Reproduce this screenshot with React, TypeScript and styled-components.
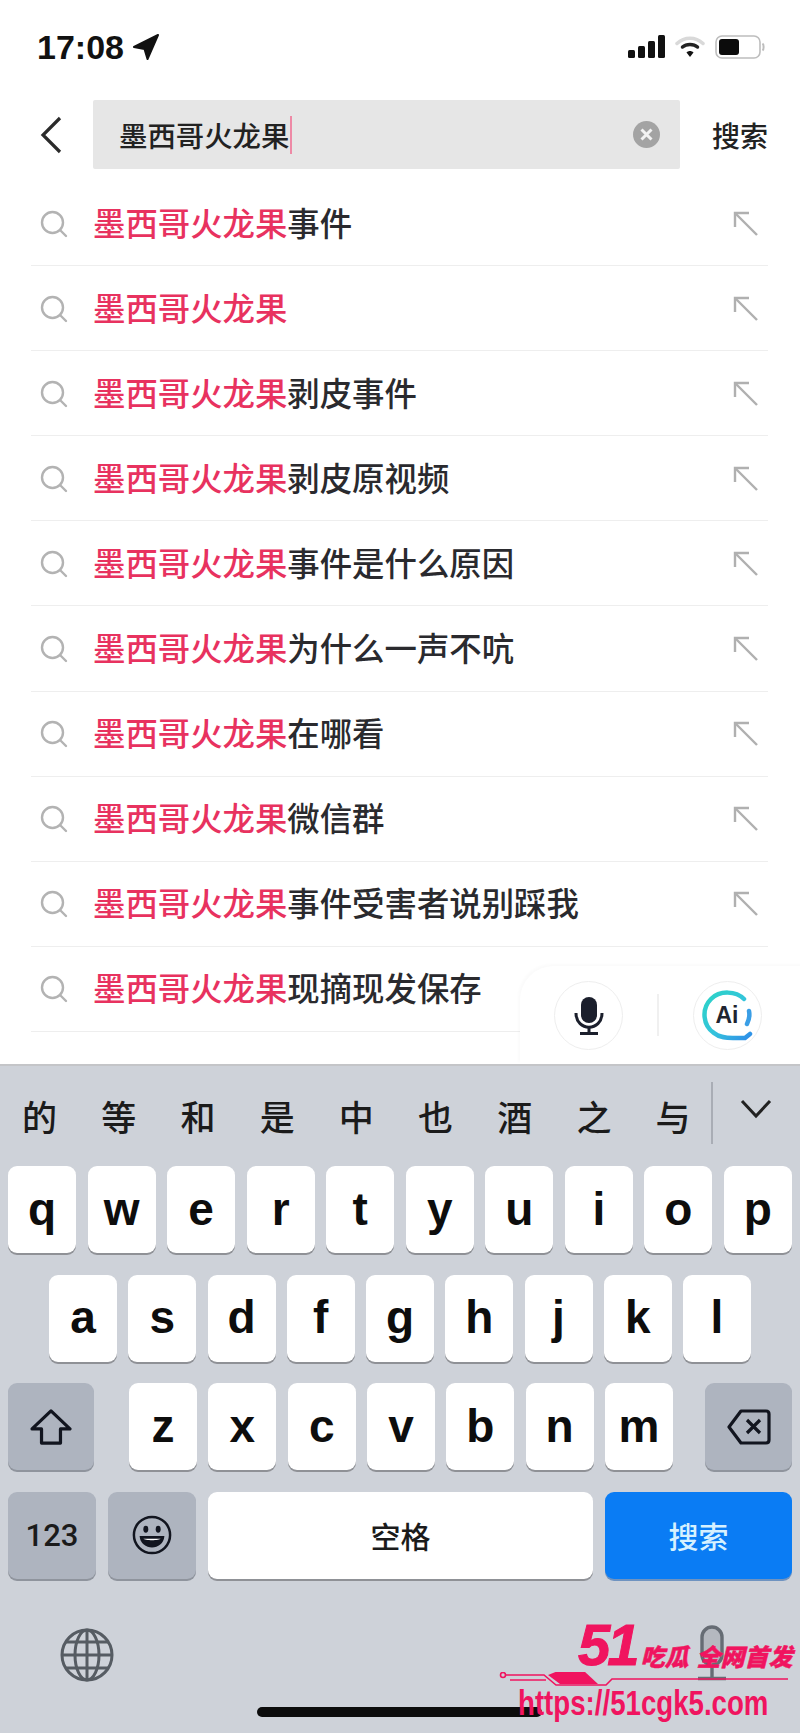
import React from 'react'
import styled, { createGlobalStyle } from 'styled-components'

const CJK = '"Noto Sans CJK SC", "Liberation Sans", sans-serif'
const KEYWORD = '墨西哥火龙果'
const SUGGESTIONS = [
  '事件',
  '',
  '剥皮事件',
  '剥皮原视频',
  '事件是什么原因',
  '为什么一声不吭',
  '在哪看',
  '微信群',
  '事件受害者说别踩我',
  '现摘现发保存'
]
const CANDIDATES = ['的', '等', '和', '是', '中', '也', '酒', '之', '与']
const ROW_1 = ['q', 'w', 'e', 'r', 't', 'y', 'u', 'i', 'o', 'p']
const ROW_2 = ['a', 's', 'd', 'f', 'g', 'h', 'j', 'k', 'l']
const ROW_3 = ['z', 'x', 'c', 'v', 'b', 'n', 'm']

const GlobalStyle = createGlobalStyle`
  html, body {
    margin: 0;
    padding: 0;
    background: #fff;
  }
`

const Page = styled.div`
  position: relative;
  width: 800px;
  height: 1733px;
  display: flex;
  flex-direction: column;
  overflow: hidden;
  background: #fff;
  font-family: ${CJK};
  color: #222;
`

const StatusBar = styled.div`
  height: 100px;
  box-sizing: border-box;
  padding: 30px 35px 0 37px;
  display: flex;
  align-items: flex-start;
  justify-content: space-between;
`

const Time = styled.div`
  display: flex;
  align-items: center;
  gap: 9px;
  font-family: 'Liberation Sans', sans-serif;
  font-weight: 700;
  font-size: 34px;
  line-height: 34px;
  color: #111;
`

const StatusIcons = styled.div`
  display: flex;
  align-items: center;
  gap: 10px;
  height: 34px;
`

const SearchRow = styled.div`
  height: 69px;
  padding: 0 32px 0 40px;
  display: flex;
  align-items: center;
`

const BackButton = styled.div`
  width: 53px;
  display: flex;
  align-items: center;
`

const SearchBox = styled.div`
  width: 587px;
  height: 69px;
  box-sizing: border-box;
  padding: 0 20px 0 26px;
  display: flex;
  align-items: center;
  justify-content: space-between;
  background: #e6e6e6;
  border-radius: 2px;
`

const SearchText = styled.div`
  display: flex;
  align-items: center;
  font-size: 28.4px;
  font-weight: 500;
  line-height: 36px;
  color: #222;
`

const Caret = styled.span`
  width: 1.5px;
  height: 38px;
  margin-left: 1px;
  background: #ee8aa6;
`

const SearchAction = styled.div`
  margin-left: auto;
  font-size: 28px;
  font-weight: 500;
  line-height: 36px;
  color: #222;
`

const List = styled.div`
  margin-top: 12px;
  height: 883px;
  padding: 0 32px 0 31px;
`

const Row = styled.div`
  height: 85.1px;
  box-sizing: border-box;
  padding-bottom: 3px;
  display: flex;
  align-items: center;
  border-bottom: 1.5px solid #eeeeee;
`

const RowSearch = styled.div`
  width: 62px;
  padding: 4px 0 0 9px;
  box-sizing: border-box;
  display: flex;
`

const RowText = styled.div`
  flex: 1;
  font-size: 32.4px;
  font-weight: 500;
  line-height: 40px;
  color: #2a2a2e;
`

const Match = styled.span`
  color: #e8325f;
`

const RowArrow = styled.div`
  margin: 4px 9px 0 0;
  display: flex;
`

const VoicePanel = styled.div`
  position: absolute;
  top: 966px;
  left: 520px;
  width: 300px;
  height: 98px;
  display: flex;
  align-items: center;
  box-sizing: border-box;
  padding: 0 0 0 34px;
  background: #fff;
  border-top-left-radius: 34px;
  box-shadow: -2px -2px 3px rgba(0, 0, 0, 0.018);
`

const RoundButton = styled.div`
  width: 69px;
  height: 69px;
  border-radius: 50%;
  border: 1.5px solid #eeeeee;
  box-sizing: border-box;
  display: flex;
  align-items: center;
  justify-content: center;
  background: #fff;
`

const PanelDivider = styled.div`
  width: 1.5px;
  height: 42px;
  margin: 0 34px;
  background: #f0f0f0;
`

const AiMark = styled.div`
  position: relative;
  width: 54px;
  height: 54px;
  display: flex;
  align-items: center;
  justify-content: center;
`

const AiLabel = styled.span`
  position: relative;
  font-family: 'Liberation Sans', sans-serif;
  font-weight: 700;
  font-size: 23px;
  color: #1f2430;
`

const Keyboard = styled.div`
  flex: 1;
  display: flex;
  flex-direction: column;
  background: #ced2d9;
  border-top: 2px solid #c4c5c8;
`

const CandidateBar = styled.div`
  height: 100px;
  display: flex;
  align-items: center;
`

const Candidates = styled.div`
  width: 711px;
  display: grid;
  grid-template-columns: repeat(9, 79.2px);
`

const Candidate = styled.span`
  text-align: center;
  font-size: 35px;
  line-height: 44px;
  font-weight: 500;
  color: #1b1b1b;
`

const CandidateDivider = styled.div`
  width: 1.5px;
  height: 62px;
  margin-top: -6px;
  background: #a9adb5;
`

const Collapse = styled.div`
  flex: 1;
  display: flex;
  justify-content: center;
  margin-top: -14px;
`

const KeyRows = styled.div`
  display: flex;
  flex-direction: column;
  gap: 21.5px;
  padding: 0 8px;
`

const KeyRow = styled.div<{ $inset?: number }>`
  display: flex;
  justify-content: space-between;
  padding: 0 ${p => p.$inset || 0}px;
`

const LetterGroup = styled.div`
  display: flex;
  gap: 11.3px;
  margin-left: 3px;
`

const Key = styled.div<{ $width?: number; $tone?: 'letter' | 'dark' | 'blue' }>`
  width: ${p => p.$width || 68}px;
  height: 87px;
  flex: none;
  box-sizing: border-box;
  display: flex;
  align-items: center;
  justify-content: center;
  border-radius: 9px;
  background: ${p =>
    p.$tone === 'dark' ? '#aeb4bf' : p.$tone === 'blue' ? '#0a7cf4' : '#fff'};
  box-shadow: 0 2px 0
    ${p => (p.$tone === 'dark' ? '#8f949d' : p.$tone === 'blue' ? '#6f93c0' : '#8f9196')};
`

const Letter = styled.span`
  font-family: 'Liberation Sans', sans-serif;
  font-weight: 700;
  font-size: 46px;
  line-height: 1;
  color: #0d0d0d;
  margin-top: -2px;
`

const NumberLabel = styled.span`
  font-family: Roboto, sans-serif;
  font-weight: 500;
  font-size: 31px;
  color: #1b1b1b;
`

const SpaceLabel = styled.span`
  font-size: 30px;
  font-weight: 500;
  color: #1b1b1b;
`

const GoLabel = styled.span`
  font-size: 30px;
  font-weight: 500;
  color: #d6f1ff;
`

const KeyboardFooter = styled.div`
  flex: 1;
  display: flex;
  align-items: flex-start;
  justify-content: space-between;
  padding: 49px 73px 0 60px;
`

const FooterMic = styled.div`
  margin-top: -3px;
  display: flex;
`

const HomeBar = styled.div`
  position: absolute;
  left: 257px;
  top: 1707px;
  width: 285px;
  height: 10px;
  border-radius: 5px;
  background: #0c0c0c;
`

const Watermark = styled.div`
  position: absolute;
  left: 498px;
  top: 1620px;
  width: 296px;
  height: 110px;
  color: #f0145f;
`

const WatermarkTitle = styled.div`
  display: flex;
  align-items: flex-end;
  padding-left: 80px;
  height: 50px;
  font-style: italic;
  font-weight: 900;
  white-space: nowrap;
`

const WatermarkBig = styled.span`
  font-family: 'Liberation Sans', sans-serif;
  font-size: 58px;
  line-height: 50px;
  letter-spacing: -3px;
  -webkit-text-stroke: 1px #f0145f;
`

const WatermarkSmall = styled.span<{ $gap?: number }>`
  font-size: 24px;
  line-height: 28px;
  margin-left: ${p => p.$gap || 0}px;
  -webkit-text-stroke: 0.5px #f0145f;
`

const WatermarkLine = styled.svg`
  display: block;
  width: 296px;
  height: 16px;
  margin-top: 2px;
`

const WatermarkUrl = styled.div`
  margin: -3px 0 0 20px;
  font-family: 'Liberation Sans', sans-serif;
  font-weight: 700;
  font-size: 35px;
  line-height: 36px;
  white-space: nowrap;
  transform: scaleX(0.79);
  transform-origin: left center;
`

const LocationArrow = () => (
  <svg width="26" height="26" viewBox="0 0 26 26">
    <path d="M25 1 L14.5 25 L11.5 15 L1 13 Z" fill="#111" stroke="#111" strokeWidth="2" strokeLinejoin="round" />
  </svg>
)

const Signal = () => (
  <svg width="37" height="24" viewBox="0 0 37 24" fill="#111" style={{ marginLeft: 2 }}>
    <rect x="0" y="15" width="7" height="8" rx="1.5" />
    <rect x="10" y="11" width="7" height="12" rx="1.5" />
    <rect x="20" y="6" width="7" height="17" rx="1.5" />
    <rect x="30" y="0" width="7" height="23" rx="1.5" />
  </svg>
)

const Wifi = () => (
  <svg width="30" height="24" viewBox="0 0 30 24" fill="none" strokeLinecap="round">
    <path d="M2 8.5 C9.5 1.5 20.5 1.5 28 8.5" stroke="#d9d9d9" strokeWidth="3.5" />
    <path d="M7.5 12 C11.5 8.5 18.5 8.5 22.5 12" stroke="#222" strokeWidth="3.5" />
    <path d="M11.5 17.5 L15 22 L18.5 17.5 C16.5 15.5 13.5 15.5 11.5 17.5 Z" fill="#111" />
  </svg>
)

const Battery = () => (
  <svg width="50" height="24" viewBox="0 0 50 24" fill="none">
    <rect x="1" y="1" width="44" height="22" rx="6" stroke="#bdbdbd" strokeWidth="1.6" />
    <rect x="4" y="4" width="20" height="16" rx="3" fill="#0c0c0c" />
    <path d="M47.5 8.5 C49 9.5 49 14.5 47.5 15.5" stroke="#bdbdbd" strokeWidth="2" />
  </svg>
)

const BackChevron = () => (
  <svg width="22" height="38" viewBox="0 0 22 38" fill="none">
    <path d="M20 2 L3 19 L20 36" stroke="#2b2b2b" strokeWidth="3.2" />
  </svg>
)

const ClearIcon = () => (
  <svg width="27" height="27" viewBox="0 0 27 27">
    <circle cx="13.5" cy="13.5" r="13.5" fill="#a3a3a3" />
    <path d="M8.5 8.5 L18.5 18.5 M18.5 8.5 L8.5 18.5" stroke="#f2f2f2" strokeWidth="3" />
  </svg>
)

const SearchGlyph = () => (
  <svg width="28" height="28" viewBox="0 0 28 28" fill="none" stroke="#b3b3b3" strokeWidth="2.4">
    <circle cx="12.5" cy="12.5" r="10.5" />
    <path d="M20 20 L26 26" strokeLinecap="round" />
  </svg>
)

const FillArrow = () => (
  <svg width="26" height="26" viewBox="0 0 26 26" fill="none" stroke="#b0b0b0" strokeWidth="2.4">
    <path d="M2 16 V2 H16" />
    <path d="M2 2 L24 24" />
  </svg>
)

const PanelMic = () => (
  <svg width="30" height="39" viewBox="0 0 30 39" fill="none" stroke="#1b1f2c">
    <rect x="7" y="1" width="16" height="26" rx="8" fill="#1b1f2c" strokeWidth="0" />
    <path d="M2 17 C2 36 28 36 28 17" strokeWidth="3" />
    <path d="M15 31 V37 M6 37.5 H24" strokeWidth="3" />
  </svg>
)

const FooterMicIcon = () => (
  <svg width="30" height="56" viewBox="0 0 30 56" fill="none" stroke="#666c74" strokeWidth="3.4">
    <rect x="5" y="2" width="20" height="38" rx="10" fill="#b4b8bf" />
    <path d="M15 40 V53 M1 53.5 H29" />
  </svg>
)

const AiRing = () => (
  <svg
    width="54"
    height="54"
    viewBox="0 0 54 54"
    fill="none"
    strokeWidth="4.5"
    strokeLinecap="round"
    style={{ position: 'absolute', left: 0, top: 0 }}>
    <defs>
      <linearGradient id="aiRing" x1="0" y1="0" x2="1" y2="1">
        <stop offset="0" stopColor="#2cd4c6" />
        <stop offset="0.55" stopColor="#34c3dc" />
        <stop offset="1" stopColor="#2f8fe8" />
      </linearGradient>
    </defs>
    <path
      d="M44 11 C36 3 20 2 11 11 C1 21 3 38 14 45 C20 50 27 50 33 50 H45 L50 46"
      stroke="url(#aiRing)"
    />
    <path d="M49 23 C50 28 49 32 47 36" stroke="#3a9ee6" />
  </svg>
)

const ShiftIcon = () => (
  <svg width="42" height="36" viewBox="0 0 44 38" fill="none" stroke="#12151f" strokeWidth="3.4" strokeLinejoin="round">
    <path d="M22 2 L42 21 H32 V36 H12 V21 H2 Z" />
  </svg>
)

const DeleteIcon = () => (
  <svg width="44" height="36" viewBox="0 0 44 36" fill="none" stroke="#12151f" strokeWidth="3.2" strokeLinejoin="round">
    <path d="M14 2 H39 Q42 2 42 5 V31 Q42 34 39 34 H14 L2 18 Z" />
    <path d="M20 11 L33 24 M33 11 L20 24" />
  </svg>
)

const SmileIcon = () => (
  <svg width="40" height="40" viewBox="0 0 42 42" fill="none" stroke="#12151f" strokeWidth="2.6">
    <circle cx="21" cy="21" r="19" />
    <ellipse cx="14.5" cy="15" rx="2.6" ry="3.6" fill="#12151f" stroke="none" />
    <ellipse cx="27.5" cy="15" rx="2.6" ry="3.6" fill="#12151f" stroke="none" />
    <path d="M8 22 H34 C33 38 9 38 8 22 Z" fill="#12151f" stroke="none" />
    <path d="M12 25 H30 C29 27 13 27 12 25 Z" fill="#fff" stroke="none" />
  </svg>
)

const GlobeIcon = () => (
  <svg width="54" height="54" viewBox="0 0 54 54" fill="none" stroke="#565c63" strokeWidth="3">
    <circle cx="27" cy="27" r="25" />
    <ellipse cx="27" cy="27" rx="12" ry="25" />
    <path d="M27 2 V52 M2 27 H52 M6 14 H48 M6 40 H48" />
  </svg>
)

const ChevronDown = () => (
  <svg width="32" height="20" viewBox="0 0 32 20" fill="none">
    <path d="M2 2 L16 17 L30 2" stroke="#222" strokeWidth="3" />
  </svg>
)

export default function App() {
  return (
    <Page>
      <GlobalStyle />
      <StatusBar>
        <Time>
          17:08
          <LocationArrow />
        </Time>
        <StatusIcons>
          <Signal />
          <Wifi />
          <Battery />
        </StatusIcons>
      </StatusBar>

      <SearchRow>
        <BackButton>
          <BackChevron />
        </BackButton>
        <SearchBox>
          <SearchText>
            {KEYWORD}
            <Caret />
          </SearchText>
          <ClearIcon />
        </SearchBox>
        <SearchAction>搜索</SearchAction>
      </SearchRow>

      <List>
        {SUGGESTIONS.map((suffix, idx) => (
          <Row key={idx}>
            <RowSearch>
              <SearchGlyph />
            </RowSearch>
            <RowText>
              <Match>{KEYWORD}</Match>
              {suffix}
            </RowText>
            <RowArrow>
              {idx < 9 && <FillArrow />}
            </RowArrow>
          </Row>
        ))}
      </List>

      <VoicePanel>
        <RoundButton>
          <PanelMic />
        </RoundButton>
        <PanelDivider />
        <RoundButton>
          <AiMark>
            <AiRing />
            <AiLabel>Ai</AiLabel>
          </AiMark>
        </RoundButton>
      </VoicePanel>

      <Keyboard>
        <CandidateBar>
          <Candidates>
            {CANDIDATES.map(c => (
              <Candidate key={c}>{c}</Candidate>
            ))}
          </Candidates>
          <CandidateDivider />
          <Collapse>
            <ChevronDown />
          </Collapse>
        </CandidateBar>

        <KeyRows>
          <KeyRow>
            {ROW_1.map(l => (
              <Key key={l}>
                <Letter>{l}</Letter>
              </Key>
            ))}
          </KeyRow>
          <KeyRow $inset={41}>
            {ROW_2.map(l => (
              <Key key={l}>
                <Letter>{l}</Letter>
              </Key>
            ))}
          </KeyRow>
          <KeyRow>
            <Key $width={86} $tone="dark">
              <ShiftIcon />
            </Key>
            <LetterGroup>
              {ROW_3.map(l => (
                <Key key={l}>
                  <Letter>{l}</Letter>
                </Key>
              ))}
            </LetterGroup>
            <Key $width={87} $tone="dark">
              <DeleteIcon />
            </Key>
          </KeyRow>
          <KeyRow>
            <Key $width={88} $tone="dark">
              <NumberLabel>123</NumberLabel>
            </Key>
            <Key $width={88} $tone="dark">
              <SmileIcon />
            </Key>
            <Key $width={385}>
              <SpaceLabel>空格</SpaceLabel>
            </Key>
            <Key $width={187} $tone="blue">
              <GoLabel>搜索</GoLabel>
            </Key>
          </KeyRow>
        </KeyRows>

        <KeyboardFooter>
          <GlobeIcon />
          <FooterMic>
            <FooterMicIcon />
          </FooterMic>
        </KeyboardFooter>
      </Keyboard>

      <HomeBar />

      <Watermark>
        <WatermarkTitle>
          <WatermarkBig>51</WatermarkBig>
          <WatermarkSmall $gap={4}>吃瓜</WatermarkSmall>
          <WatermarkSmall $gap={8}>全网首发</WatermarkSmall>
        </WatermarkTitle>
        <WatermarkLine viewBox="0 0 296 16" fill="none" stroke="#f0145f" strokeWidth="1.6">
          <circle cx="5" cy="3" r="2.5" />
          <path d="M8 3 H46 L58 13 H108 L114 7 H290" />
          <path d="M12 8 H48" />
          <path d="M50 3 L60 -1 H86 L100 12 H62 Z" fill="#f0145f" stroke="none" />
        </WatermarkLine>
        <WatermarkUrl>https://51cgk5.com</WatermarkUrl>
      </Watermark>
    </Page>
  )
}
